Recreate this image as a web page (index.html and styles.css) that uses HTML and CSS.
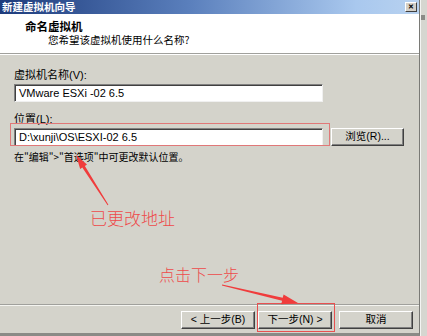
FILE: index.html
```html
<!DOCTYPE html>
<html lang="zh">
<head>
<meta charset="utf-8">
<title>新建虚拟机向导</title>
<link rel="stylesheet" href="styles.css">
</head>
<body>
<div class="screen">
  <div class="window">
    <div class="titlebar">
      <span class="title">新建虚拟机向导</span>
      <span class="close">✕</span>
    </div>
    <div class="header">
      <div class="h-title">命名虚拟机</div>
      <div class="h-sub">您希望该虚拟机使用什么名称?</div>
    </div>
    <div class="content">
      <div class="label">虚拟机名称(V):</div>
      <div class="row">
        <div class="input">VMware ESXi -02 6.5</div>
      </div>
      <div class="label label2">位置(L):</div>
      <div class="row">
        <div class="input">D:\xunji\OS\ESXI-02 6.5</div>
        <div class="btn browse">浏览(R)...</div>
      </div>
      <div class="hint">在"编辑"&gt;"首选项"中可更改默认位置。</div>
    </div>
    <div class="footer">
      <div class="btn">&lt; 上一步(B)</div>
      <div class="btn next">下一步(N) &gt;</div>
      <div class="btn cancel">取消</div>
    </div>
  </div>
  <div class="edge"><span class="edge-icon"></span></div>

  <div class="annot box-loc"></div>
  <div class="annot box-next"></div>
  <div class="annot note note1">已更改地址</div>
  <div class="annot note note2">点击下一步</div>
  <svg class="annot arrows" width="427" height="336" viewBox="0 0 427 336">
    <polygon points="76,155 87,164.6 84.9,166 108.4,204.7 107.6,205.3 82.3,167.6 80.2,169"/>
    <polygon points="298,303 283.6,294.4 282.7,297.8 222.1,284.5 221.9,285.5 282.1,300.8 281.2,304.2"/>
  </svg>
</div>
</body>
</html>
```
FILE: styles.css
```css
* { box-sizing: border-box; }
html, body { margin: 0; padding: 0; }
body {
  width: 427px;
  height: 336px;
  overflow: hidden;
  background: #d4d3cb;
  font-family: "Liberation Sans", "Noto Sans CJK SC", sans-serif;
  font-size: 11px;
  color: #000;
}
.screen {
  position: relative;
  display: flex;
  width: 427px;
  height: 336px;
}
.window {
  width: 420px;
  height: 336px;
  display: flex;
  flex-direction: column;
  background: #d4d3cb;
  border-right: 1px solid #7a7a76;
  border-bottom: 3px solid #8a8a86;
}
.titlebar {
  height: 14px;
  display: flex;
  align-items: center;
  justify-content: space-between;
  padding: 0 2px 0 2px;
  background: linear-gradient(to right, #1d3b7c 0%, #5a7fbc 45%, #a9c8ee 85%, #b8d2f0 100%);
}
.title {
  color: #fff;
  font-weight: bold;
  font-size: 10.5px;
  line-height: 14px;
  font-family: "Noto Sans CJK SC", sans-serif;
}
.close {
  width: 12px;
  height: 10px;
  background: #d4d0c8;
  border: 1px solid;
  border-color: #fff #404040 #404040 #fff;
  font-size: 7px;
  line-height: 8px;
  text-align: center;
  font-weight: bold;
  color: #000;
}
.header {
  height: 40px;
  background: #fff;
  padding: 5px 0 0 25px;
  border-bottom: 1px solid #a0a09c;
  box-shadow: 0 1px 0 #fff;
  font-family: "Noto Sans CJK SC", sans-serif;
}
.h-title {
  font-weight: bold;
  font-size: 11.5px;
  line-height: 14px;
}
.h-sub {
  font-size: 10.5px;
  line-height: 14px;
  margin: 0 0 0 23px;
}
.content {
  flex: 1;
  padding: 15px 0 0 14px;
  border-bottom: 1px solid #a0a09c;
  box-shadow: 0 1px 0 #f4f4f0;
}
.label {
  line-height: 13px;
  height: 13px;
}
.label2 { margin-top: 11px; }
.row {
  display: flex;
  gap: 8px;
  margin-top: 2px;
}
.input {
  width: 309px;
  height: 18px;
  background: #fff;
  border: 1px solid;
  border-color: #808080 #f0f0f0 #f0f0f0 #808080;
  box-shadow: inset 1px 1px 0 #404040;
  padding: 0 0 0 4px;
  line-height: 16px;
  font-size: 11px;
}
.btn {
  width: 74px;
  height: 18px;
  background: #d4d3cb;
  border: 1px solid;
  border-color: #fff #404040 #404040 #fff;
  box-shadow: inset -1px -1px 0 #808080;
  text-align: center;
  line-height: 15px;
  font-size: 10.5px;
}
.browse { width: 73px; }
.hint {
  margin-top: 5px;
  font-size: 10px;
  line-height: 12px;
  font-family: "Noto Sans CJK SC", sans-serif;
}
.footer {
  height: 28px;
  display: flex;
  justify-content: flex-end;
  align-items: flex-start;
  padding: 6px 6px 0 0;
  gap: 3px;
}
.footer .cancel { margin-left: 4px; }
.edge {
  width: 7px;
  height: 336px;
  background: #d6d6d0;
  border-left: 1px solid #f4f4f2;
  position: relative;
}
.edge-icon {
  display: block;
  width: 4px;
  height: 5px;
  margin: 15px 0 0 0;
  background: #8a8a86;
}
.annot {
  position: absolute;
  pointer-events: none;
}
.box-loc {
  left: 10px;
  top: 123px;
  width: 320px;
  height: 23px;
  border: 1px solid #e07878;
}
.box-next {
  left: 257px;
  top: 303px;
  width: 78px;
  height: 29px;
  border: 1px solid #e85050;
}
.note {
  color: #ee4a4a;
  font-family: "Noto Sans CJK SC", sans-serif;
  font-weight: 300;
  white-space: nowrap;
}
.note1 {
  left: 90px;
  top: 208px;
  font-size: 17px;
  line-height: 20px;
}
.note2 {
  left: 159px;
  top: 264px;
  font-size: 16px;
  line-height: 20px;
}
.arrows {
  left: 0;
  top: 0;
  fill: #f03c3c;
}
```
